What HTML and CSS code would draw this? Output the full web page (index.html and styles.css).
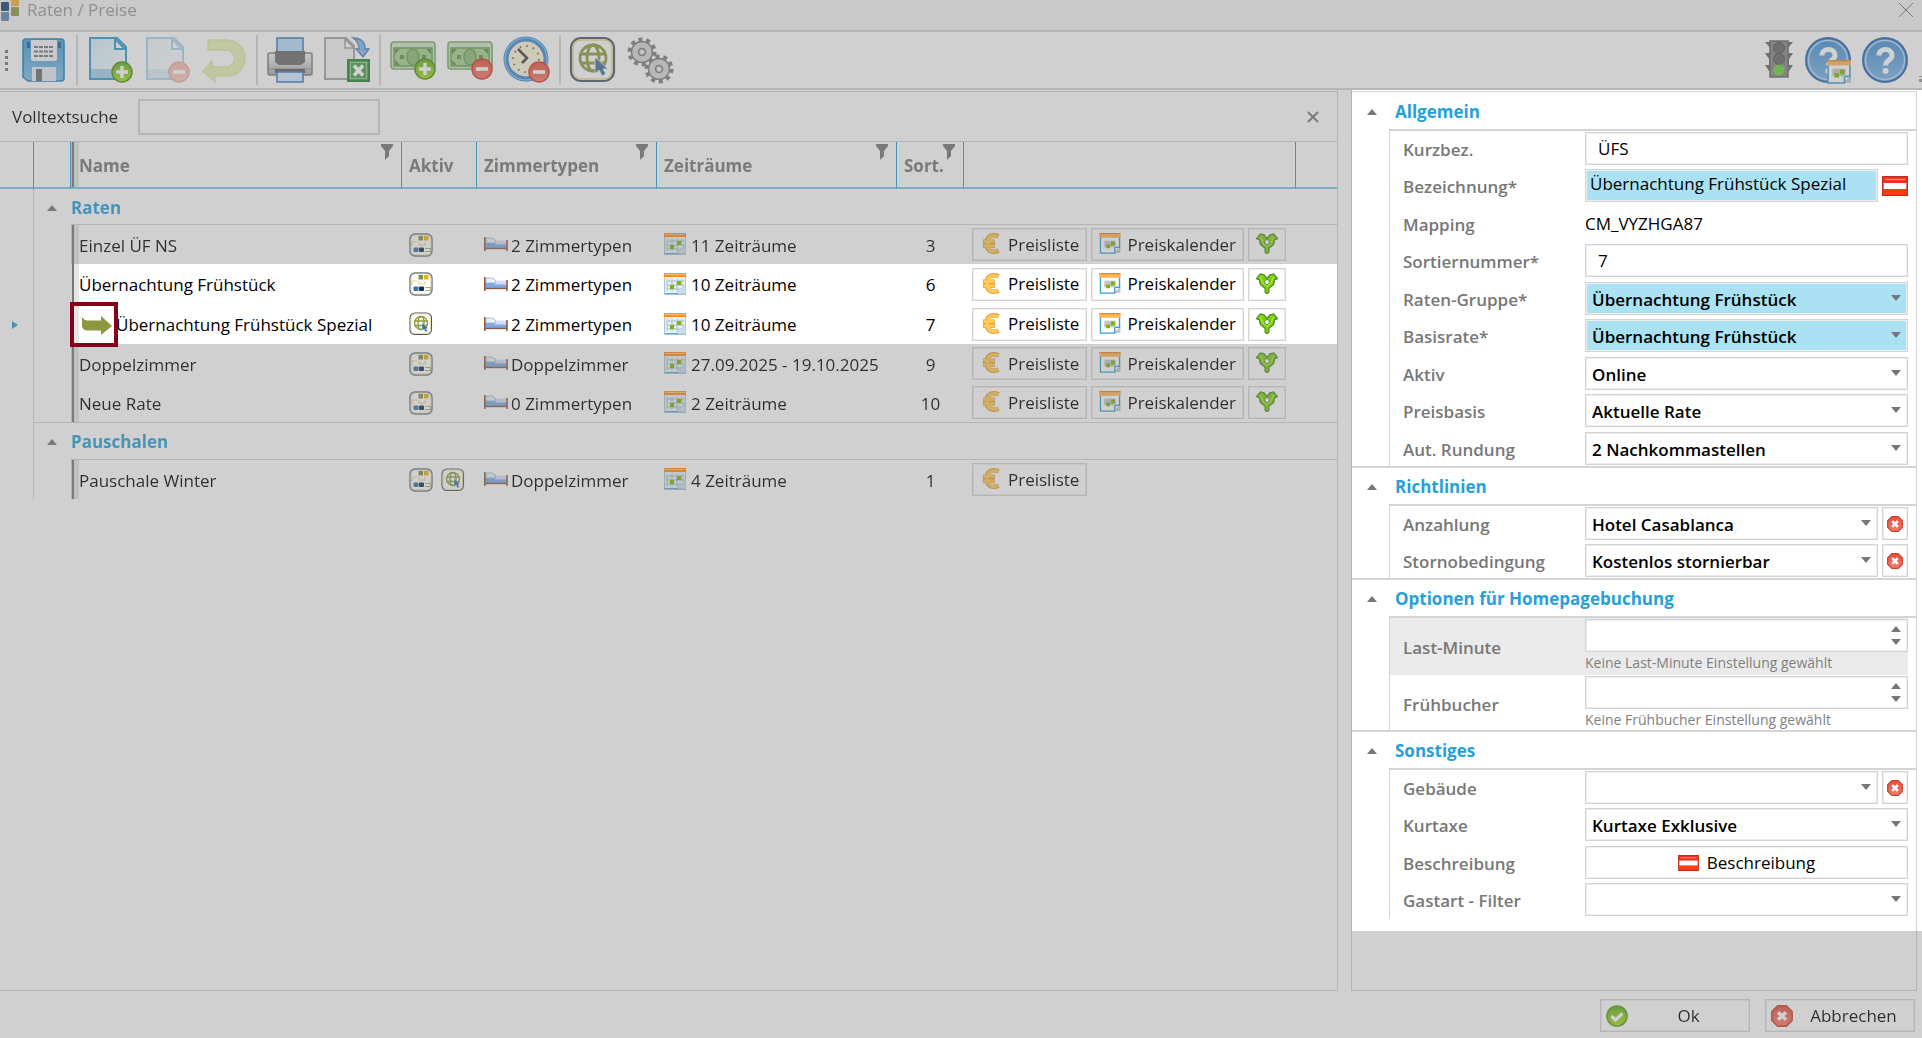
FILE: index.html
```html
<!DOCTYPE html>
<html lang="de">
<head>
  <meta charset="UTF-8">
  <meta name="viewport" content="width=device-width, initial-scale=1.0">
  <title>Raten / Preise</title>
  <link rel="stylesheet" href="styles.css">
</head>
<body>
  <!-- Icon sprite -->
  <svg class="sprite" aria-hidden="true">
    <defs>
      <linearGradient id="gBlue" x1="0" y1="0" x2="0" y2="1"><stop offset="0" stop-color="#3f9ed8"/><stop offset="1" stop-color="#7fbde6"/></linearGradient>
      <linearGradient id="gPage" x1="0" y1="0" x2="1" y2="1"><stop offset="0" stop-color="#d3edfa"/><stop offset="1" stop-color="#ffffff"/></linearGradient>
      <linearGradient id="gGrey" x1="0" y1="0" x2="0" y2="1"><stop offset="0" stop-color="#f4f4f4"/><stop offset="1" stop-color="#a9a9ad"/></linearGradient>
      <linearGradient id="gHelp" x1="0" y1="0" x2="0" y2="1"><stop offset="0" stop-color="#3f8fd6"/><stop offset="1" stop-color="#7db4e8"/></linearGradient>
      <linearGradient id="gGreen" x1="0" y1="0" x2="0" y2="1"><stop offset="0" stop-color="#5fae1c"/><stop offset="1" stop-color="#a8e01e"/></linearGradient>
      <linearGradient id="gRed" x1="0" y1="0" x2="0" y2="1"><stop offset="0" stop-color="#e2503f"/><stop offset="1" stop-color="#fb7a6a"/></linearGradient>
    </defs>
    <symbol id="plus" viewBox="0 0 22 22"><circle cx="11" cy="11" r="10" fill="url(#gGreen)" stroke="#4b8f14" stroke-width="1.5"/><path d="M11 5v12M5 11h12" stroke="#fff" stroke-width="3.4"/></symbol>
    <symbol id="minus" viewBox="0 0 22 22"><circle cx="11" cy="11" r="10" fill="url(#gRed)" stroke="#cf3b2c" stroke-width="1.5"/><path d="M5 11h12" stroke="#fff" stroke-width="3.6"/></symbol>
    <symbol id="save" viewBox="0 0 48 48">
      <path d="M6 3h35q3 0 3 3v36q0 3-3 3H8l-5-4V6q0-3 3-3z" fill="url(#gBlue)" stroke="#1f84c4" stroke-width="1.6"/>
      <path d="M7 6h3v6H7zM38 6h3v6h-3z" fill="#1c5f96"/>
      <path d="M11 4h26v19q0 2-2 2H13q-2 0-2-2z" fill="#f4f6fa"/>
      <path d="M14 11h20M14 15.500h20M14 20h20" stroke="#777" stroke-width="2" stroke-dasharray="4 1"/>
      <path d="M12 31h24v14H12z" fill="#e6eaf5"/><path d="M16 33h6v12h-6z" fill="#6e6e6e"/>
    </symbol>
    <symbol id="page" viewBox="0 0 48 48">
      <path d="M4 2h27l9 9v32H4z" fill="url(#gPage)" stroke="#2a9bd0" stroke-width="2"/>
      <path d="M5 33h34v9H5z" fill="#a5d3ec"/>
      <path d="M29 3v10h10z" fill="#fff" stroke="#2a9bd0" stroke-width="2"/>
    </symbol>
    <symbol id="page-add" viewBox="0 0 48 48"><use href="#page"/><use href="#plus" x="25" y="25" width="22" height="22"/></symbol>
    <symbol id="page-remove" viewBox="0 0 48 48"><use href="#page"/><use href="#minus" x="25" y="25" width="22" height="22"/></symbol>
    <symbol id="undo" viewBox="0 0 48 48"><path d="M8 4h18c26 0 24 37 1 36h-12v6L3 35l9-10v6h14c12 0 11-17 0-17H8z" fill="#c3e04a" stroke="#a6c931" stroke-width="1.500"/></symbol>
    <symbol id="printer" viewBox="0 0 48 48">
      <rect x="2" y="17" width="44" height="22" rx="2" fill="url(#gGrey)" stroke="#808080" stroke-width="1.6"/>
      <rect x="11" y="2" width="26" height="17" fill="#b9dafb" stroke="#3f7fc2" stroke-width="1.600"/>
      <path d="M9 15h30v11l-4 3H13l-4-3z" fill="#6a6a6a"/>
      <path d="M3 33h42" stroke="#8f8f8f"/>
      <rect x="9" y="33" width="30" height="4" fill="#5c5c5c"/>
      <rect x="11" y="36" width="26" height="10" fill="#d6eaff" stroke="#3f7fc2" stroke-width="1.600"/>
    </symbol>
    <symbol id="excel" viewBox="0 0 48 48">
      <path d="M2 2h21l8 8v33H2z" fill="#f4f4f4" stroke="#a5a5a5" stroke-width="2"/><path d="M22 3v9h9z" fill="#fff" stroke="#a5a5a5" stroke-width="1.600"/>
      <path d="M30 2c10 0 12 6 12 11h4l-6 8-7-8h3c0-4-1-8-6-11z" fill="#86bdec" stroke="#4484bb" stroke-width="1.300"/>
      <rect x="25" y="24" width="21" height="21" fill="#46a046" stroke="#2b8430" stroke-width="2"/><rect x="27.500" y="26.500" width="16" height="16" fill="none" stroke="#9bd09b"/><path d="M31 29.500l9 10M40 29.500l-9 10" stroke="#fff" stroke-width="3.600"/>
    </symbol>
    <symbol id="money" viewBox="0 0 48 48">
      <rect x="2" y="6" width="44" height="27" rx="3" fill="#cfe8bf" stroke="#79ac6a" stroke-width="1.600"/>
      <rect x="5" y="12" width="38" height="18" fill="#a8d18f" stroke="#69a35a" stroke-width="1.600"/>
      <ellipse cx="24" cy="21" rx="6" ry="8" fill="#8cba7b" stroke="#69a35a" stroke-width="1.600"/>
      <path d="M11 19h4v4h-4zM33 19h4v4h-4zM6 13h5l-5 5zM42 13h-5l5 5zM6 29h5l-5-5z" fill="#5c934f"/>
    </symbol>
    <symbol id="money-add" viewBox="0 0 48 48"><use href="#money"/><use href="#plus" x="25" y="22" width="22" height="22"/></symbol>
    <symbol id="money-remove" viewBox="0 0 48 48"><use href="#money"/><use href="#minus" x="25" y="22" width="22" height="22"/></symbol>
    <symbol id="clock" viewBox="0 0 48 48">
      <circle cx="23" cy="23" r="20" fill="#fcf5d8" stroke="#3b8bd2" stroke-width="5"/><circle cx="23" cy="23" r="21" fill="none" stroke="#8fc4f0" stroke-width="1.200"/>
      <path d="M15 13l9 9-5 5" fill="none" stroke="#444" stroke-width="2.600"/>
      <circle cx="23" cy="23" r="13" fill="none" stroke="#666" stroke-width="2" stroke-dasharray="1.500 5.300"/>
      <use href="#minus" x="25" y="25" width="22" height="22"/>
    </symbol>
    <symbol id="web" viewBox="0 0 48 48">
      <rect x="2" y="2" width="43" height="43" rx="10" fill="#fdfdfd" stroke="#4c5a66" stroke-width="2.200"/><rect x="4" y="4" width="39" height="39" rx="8" fill="none" stroke="#e8d690" stroke-width="1.500"/>
      <g fill="none" stroke="#8d9b3d" stroke-width="2.800"><circle cx="24" cy="22" r="13"/><ellipse cx="24" cy="22" rx="6" ry="13"/><path d="M11 18h26M12 27h24"/></g>
      <path d="M26 21v17l4-4 3 6 4-2-3-5h5z" fill="#3f719a" stroke="#fff" stroke-width=".8"/>
    </symbol>
    <symbol id="gears" viewBox="0 0 48 48">
      <g fill="none" stroke="#7d7d7d"><circle cx="16" cy="16" r="12.500" stroke-width="4" stroke-dasharray="4 3.850"/><circle cx="33" cy="33" r="12.500" stroke-width="4" stroke-dasharray="4 3.850"/></g>
      <g fill="#d5d7da" stroke="#7d7d7d" stroke-width="1.500"><circle cx="16" cy="16" r="10.500"/><circle cx="16" cy="16" r="3.500"/><circle cx="33" cy="33" r="10.500"/><circle cx="33" cy="33" r="3.500"/></g>
      <g fill="#fff"><circle cx="16" cy="16" r="1.500"/><circle cx="33" cy="33" r="1.500"/></g>
    </symbol>
    <symbol id="traffic" viewBox="0 0 32 48">
      <path d="M2 6h28l-5 6v5h5l-4 6v6h4l-4 6H6l-4-6h4v-6l-4-6h5v-5z" fill="#666"/>
      <rect x="7" y="5" width="18" height="36" fill="#868686" stroke="#666" stroke-width="1.500"/>
      <circle cx="16" cy="12" r="5.500" fill="#666" stroke="#505050"/><circle cx="16" cy="23" r="5.500" fill="#666" stroke="#505050"/><circle cx="16" cy="34" r="5.500" fill="#6cd03c"/>
    </symbol>
    <symbol id="help" viewBox="0 0 48 48">
      <circle cx="24" cy="24" r="22" fill="url(#gHelp)" stroke="#2a66b5" stroke-width="2"/><circle cx="24" cy="24" r="19.500" fill="none" stroke="#b8d8f6" stroke-width="1.500"/>
      <path d="M18 19.500c0-8 13-8 13 0 0 4.500-6.500 4.500-6.500 10" fill="none" stroke="#fff" stroke-width="5"/><circle cx="24.500" cy="35" r="3" fill="#fff"/>
    </symbol>
    <symbol id="calendar" viewBox="0 0 22 22">
      <rect x=".5" y=".5" width="21" height="21" fill="#e2f2fb" stroke="#a9c4d2"/><path d="M0 0h22v4H0z" fill="#ff8c1a"/><path d="M1 1.500h20" stroke="#ffc27a"/>
      <path d="M3 6v12M8 6v12M13 6v12M18 6v7M3 8h17M3 12h17M3 16h12" stroke="#b5bcc0" stroke-width="1"/>
      <path d="M6 12h4v4H6zM13 8h4v4h-4z" fill="#76b900"/><path d="M13 21c2-2 0-5 4-5 2-1 3-3 5-5v10z" fill="#c9dfee" stroke="#9db8ca" stroke-width=".7"/><path d="M1 20.500h13" stroke="#58aad8"/>
    </symbol>
    <symbol id="calendar2" viewBox="0 0 22 22">
      <path d="M15 21h7v-7z" fill="#c5c9cd"/>
      <path d="M1 1h20v14h-5v6H1z" fill="#fff" stroke="#3b9dd0" stroke-width="1.400"/><path d="M0 0h22v5H0z" fill="#ffb45c"/><path d="M0 .6h22" stroke="#e8831c" stroke-width="1.200"/>
      <rect x="5" y="8" width="12" height="7" fill="#c7c7c7"/><path d="M7 12h4v4H7zM12 9h4v4h-4z" fill="#76b900"/>
    </symbol>
    <symbol id="help-cal" viewBox="0 0 48 48"><use href="#help"/><use href="#calendar2" x="23" y="24" width="24" height="24"/></symbol>
    <symbol id="bed" viewBox="0 0 24 16"><path d="M1 7h22v5H1z" fill="#7ba9e6"/><path d="M11 4.500h12v4H11z" fill="#d6dcfb"/><path d="M2 2h6q4 1 4 5H2z" fill="#e8f4fb" stroke="#9bb8c8" stroke-width=".9"/><path d="M.8 1v14M23 4v11" stroke="#8f5a41" stroke-width="1.600"/><path d="M1 12.500h22" stroke="#8f5a41" stroke-width="1.400"/></symbol>
    <symbol id="channel" viewBox="0 0 24 24">
      <rect x="1" y="1" width="22" height="22" rx="5" fill="#fff" stroke="#6b7780" stroke-width="1.400"/><rect x="2.200" y="2.200" width="19.600" height="19.600" rx="4" fill="none" stroke="#eadfae" stroke-width=".8"/>
      <path d="M9.500 3h4.500v4.500H9.500z" fill="#7f8d4c"/><path d="M15 3h4.500v4.500H15z" fill="#e8b316"/>
      <path d="M3 13V9h5M10 9v3h6V9" fill="none" stroke="#efd08a" stroke-width="1.200"/>
      <rect x="4.500" y="14.500" width="5" height="4.500" rx="1" fill="#41719d"/><rect x="10" y="14.500" width="5" height="4.500" rx="1" fill="#0c3357"/>
      <path d="M16 15.500h5.500v3H16" fill="none" stroke="#a9b27a" stroke-width="1.100"/>
    </symbol>
    <symbol id="euro" viewBox="0 0 20 22"><path d="M18 3.500C9 0 5.500 5 5.500 11S9 22 18 18.500M1.500 9h12.500M1.500 13.500h12.500" fill="none" stroke="#dc9c3a" stroke-width="4.600"/><path d="M17.500 3.600C9.500.8 6 5 6 11s3.500 10.200 11.500 7.400M2 9h11.500M2 13.500h11.500" fill="none" stroke="#ffcb54" stroke-width="3.200"/></symbol>
    <symbol id="fork" viewBox="0 0 22 22"><path d="M0 6l4-5 4 1 3 4 3-4 4-1 4 5-3 1-1 5-5 4v4l-2 2-2-2v-4l-5-4-1-5z" fill="#7ed00c" stroke="#4c8b24" stroke-width="1.300"/><circle cx="11" cy="9.500" r="2.600" fill="#fff" stroke="#4c8b24"/><path d="M4 4l3 7 4 3 4-3 3-7" fill="none" stroke="#bdf04d"/></symbol>
    <symbol id="flag" viewBox="0 0 26 20"><rect x=".8" y=".8" width="24.400" height="18.400" fill="#fff" stroke="#c0281a" stroke-width="1.600"/><path d="M1 1h24v6H1z" fill="#f3301c"/><path d="M1 13h24v6H1z" fill="#fa3c14"/><path d="M3 3.500h20" stroke="#ff9286" stroke-width="1.200"/></symbol>
    <symbol id="cross" viewBox="0 0 20 20"><path d="M6 .8h8L19.200 6v8L14 19.200H6L.8 14V6z" fill="url(#gRed)" stroke="#d04232" stroke-width="1.500"/><path d="M6.500 6.500l7 7M13.500 6.500l-7 7" stroke="#fff" stroke-width="3.200"/></symbol>
    <symbol id="check" viewBox="0 0 22 22"><circle cx="11" cy="11" r="10" fill="url(#gGreen)" stroke="#5d9a1e" stroke-width="1.600"/><path d="M5.500 11l4 4 7-6.500" fill="none" stroke="#fff" stroke-width="3.200"/></symbol>
    <symbol id="funnel" viewBox="0 0 12 16"><path d="M0 0h12v2L8 7v5l-4 4V7L0 2z" fill="#777"/></symbol>
    <symbol id="derived" viewBox="0 0 30 20"><path d="M0 1c2 3 4 3.500 8 3.500h11V0l11 10-11 9v-4.500H6c-4 0-6-2-6-5z" fill="#8f9640"/></symbol>
    <symbol id="logo" viewBox="0 0 19 21"><rect x="1" y="2" width="8" height="9" rx="1" fill="#1b4668"/><rect x="11" y="-3" width="8" height="9" fill="#f0b429"/><rect x="11" y="7" width="8" height="9" rx="1" fill="#8b9a4b"/><rect x="1" y="12" width="8" height="9" rx="1" fill="#5e88ab"/></symbol>
  </svg>

  <header class="titlebar dim">
    <svg class="logo"><use href="#logo"/></svg>
    <h1>Raten / Preise</h1>
    <button class="close" aria-label="Schließen"><svg viewBox="0 0 16 16"><path d="M1 1l14 14M15 1L1 15"/></svg></button>
  </header>

  <nav class="toolbar dim">
    <span class="grip"></span>
    <button class="tool" title="Speichern"><svg><use href="#save"/></svg></button>
    <span class="sep"></span>
    <button class="tool" title="Neu"><svg><use href="#page-add"/></svg></button>
    <button class="tool" title="Löschen" disabled><svg><use href="#page-remove"/></svg></button>
    <button class="tool" title="Rückgängig" disabled><svg><use href="#undo"/></svg></button>
    <span class="sep"></span>
    <button class="tool" title="Drucken"><svg><use href="#printer"/></svg></button>
    <button class="tool" title="Export"><svg><use href="#excel"/></svg></button>
    <span class="sep"></span>
    <button class="tool" title="Preis hinzufügen"><svg><use href="#money-add"/></svg></button>
    <button class="tool" title="Preis entfernen"><svg><use href="#money-remove"/></svg></button>
    <button class="tool" title="Zeitraum entfernen"><svg><use href="#clock"/></svg></button>
    <span class="sep"></span>
    <button class="tool" title="Online"><svg><use href="#web"/></svg></button>
    <button class="tool" title="Einstellungen"><svg><use href="#gears"/></svg></button>
    <span class="spacer"></span>
    <button class="tool narrow" title="Status"><svg><use href="#traffic"/></svg></button>
    <button class="tool" title="Termin"><svg><use href="#help-cal"/></svg></button>
    <button class="tool" title="Hilfe"><svg><use href="#help"/></svg></button>
    <span class="overflow"></span>
  </nav>

  <main>
    <section class="list">
      <div class="search dim">
        <label for="search">Volltextsuche</label>
        <input type="text" id="search">
        <button class="close" aria-label="Suche schließen"><svg viewBox="0 0 16 16"><path d="M3 3l10 10M13 3L3 13"/></svg></button>
      </div>

      <table class="rates">
        <colgroup>
          <col class="c-mark"><col class="c-exp"><col class="c-name"><col class="c-aktiv"><col class="c-zimmer"><col class="c-zeit"><col class="c-sort"><col class="c-actions"><col>
        </colgroup>
        <thead>
          <tr>
            <th></th>
            <th></th>
            <th class="name">Name<svg class="funnel"><use href="#funnel"/></svg></th>
            <th>Aktiv</th>
            <th>Zimmertypen<svg class="funnel"><use href="#funnel"/></svg></th>
            <th>Zeiträume<svg class="funnel"><use href="#funnel"/></svg></th>
            <th>Sort.<svg class="funnel"><use href="#funnel"/></svg></th>
            <th></th>
            <th></th>
          </tr>
        </thead>
        <tbody>
          <tr class="group">
            <td></td>
            <td><span class="arrow up"></span></td>
            <td colspan="7">Raten</td>
          </tr>
          <tr>
            <td></td><td></td>
            <td class="name">Einzel ÜF NS</td>
            <td><svg class="state"><use href="#channel"/></svg></td>
            <td><svg class="bed"><use href="#bed"/></svg>2 Zimmertypen</td>
            <td><svg class="cal"><use href="#calendar"/></svg>11 Zeiträume</td>
            <td class="num">3</td>
            <td class="actions"><button><svg class="euro"><use href="#euro"/></svg>Preisliste</button><button><svg><use href="#calendar2"/></svg>Preiskalender</button><button aria-label="Verteilen"><svg><use href="#fork"/></svg></button></td>
            <td></td>
          </tr>
          <tr class="lit">
            <td></td><td></td>
            <td class="name">Übernachtung Frühstück</td>
            <td><svg class="state"><use href="#channel"/></svg></td>
            <td><svg class="bed"><use href="#bed"/></svg>2 Zimmertypen</td>
            <td><svg class="cal"><use href="#calendar"/></svg>10 Zeiträume</td>
            <td class="num">6</td>
            <td class="actions"><button><svg class="euro"><use href="#euro"/></svg>Preisliste</button><button><svg><use href="#calendar2"/></svg>Preiskalender</button><button aria-label="Verteilen"><svg><use href="#fork"/></svg></button></td>
            <td></td>
          </tr>
          <tr class="lit">
            <td><span class="current"></span></td><td></td>
            <td class="name derived"><span class="marker"></span><svg class="derived-icon"><use href="#derived"/></svg>Übernachtung Frühstück Spezial</td>
            <td><svg class="state"><use href="#web"/></svg></td>
            <td><svg class="bed"><use href="#bed"/></svg>2 Zimmertypen</td>
            <td><svg class="cal"><use href="#calendar"/></svg>10 Zeiträume</td>
            <td class="num">7</td>
            <td class="actions"><button><svg class="euro"><use href="#euro"/></svg>Preisliste</button><button><svg><use href="#calendar2"/></svg>Preiskalender</button><button aria-label="Verteilen"><svg><use href="#fork"/></svg></button></td>
            <td></td>
          </tr>
          <tr>
            <td></td><td></td>
            <td class="name">Doppelzimmer</td>
            <td><svg class="state"><use href="#channel"/></svg></td>
            <td><svg class="bed"><use href="#bed"/></svg>Doppelzimmer</td>
            <td><svg class="cal"><use href="#calendar"/></svg>27.09.2025 - 19.10.2025</td>
            <td class="num">9</td>
            <td class="actions"><button><svg class="euro"><use href="#euro"/></svg>Preisliste</button><button><svg><use href="#calendar2"/></svg>Preiskalender</button><button aria-label="Verteilen"><svg><use href="#fork"/></svg></button></td>
            <td></td>
          </tr>
          <tr>
            <td></td><td></td>
            <td class="name">Neue Rate</td>
            <td><svg class="state"><use href="#channel"/></svg></td>
            <td><svg class="bed"><use href="#bed"/></svg>0 Zimmertypen</td>
            <td><svg class="cal"><use href="#calendar"/></svg>2 Zeiträume</td>
            <td class="num">10</td>
            <td class="actions"><button><svg class="euro"><use href="#euro"/></svg>Preisliste</button><button><svg><use href="#calendar2"/></svg>Preiskalender</button><button aria-label="Verteilen"><svg><use href="#fork"/></svg></button></td>
            <td></td>
          </tr>
          <tr class="group next">
            <td></td>
            <td><span class="arrow up"></span></td>
            <td colspan="7">Pauschalen</td>
          </tr>
          <tr>
            <td></td><td></td>
            <td class="name">Pauschale Winter</td>
            <td><svg class="state"><use href="#channel"/></svg><svg class="state"><use href="#web"/></svg></td>
            <td><svg class="bed"><use href="#bed"/></svg>Doppelzimmer</td>
            <td><svg class="cal"><use href="#calendar"/></svg>4 Zeiträume</td>
            <td class="num">1</td>
            <td class="actions"><button><svg class="euro"><use href="#euro"/></svg>Preisliste</button></td>
            <td></td>
          </tr>
        </tbody>
      </table>
    </section>

    <aside class="details">
      <form class="form">
        <div class="form-inner">
          <h2><span class="arrow up"></span>Allgemein</h2>
          <div class="fields">
            <div class="row"><label for="kurz">Kurzbez.</label><div class="value"><input type="text" id="kurz" class="wide-pad" value="ÜFS"></div></div>
            <div class="row"><label for="bez">Bezeichnung*</label><div class="value"><input type="text" id="bez" class="required" value="Übernachtung Frühstück Spezial"><button type="button" class="flag-btn" aria-label="Sprache"><svg><use href="#flag"/></svg></button></div></div>
            <div class="row"><span class="label">Mapping</span><div class="value">CM_VYZHGA87</div></div>
            <div class="row"><label for="sort">Sortiernummer*</label><div class="value"><input type="text" id="sort" class="wide-pad" value="7"></div></div>
            <div class="row"><label for="gruppe">Raten-Gruppe*</label><div class="value"><div class="select required"><select id="gruppe"><option>Übernachtung Frühstück</option></select></div></div></div>
            <div class="row"><label for="basis">Basisrate*</label><div class="value"><div class="select required"><select id="basis"><option>Übernachtung Frühstück</option></select></div></div></div>
            <div class="row"><label for="aktiv">Aktiv</label><div class="value"><div class="select"><select id="aktiv"><option>Online</option></select></div></div></div>
            <div class="row"><label for="preisbasis">Preisbasis</label><div class="value"><div class="select"><select id="preisbasis"><option>Aktuelle Rate</option></select></div></div></div>
            <div class="row"><label for="rundung">Aut. Rundung</label><div class="value"><div class="select"><select id="rundung"><option>2 Nachkommastellen</option></select></div></div></div>
          </div>

          <h2><span class="arrow up"></span>Richtlinien</h2>
          <div class="fields">
            <div class="row"><label for="anzahlung">Anzahlung</label><div class="value"><div class="select"><select id="anzahlung"><option>Hotel Casablanca</option></select></div><button type="button" class="clear" aria-label="Leeren"><svg><use href="#cross"/></svg></button></div></div>
            <div class="row"><label for="storno">Stornobedingung</label><div class="value"><div class="select"><select id="storno"><option>Kostenlos stornierbar</option></select></div><button type="button" class="clear" aria-label="Leeren"><svg><use href="#cross"/></svg></button></div></div>
          </div>

          <h2><span class="arrow up"></span>Optionen für Homepagebuchung</h2>
          <div class="fields">
            <div class="row tall hover"><label for="lastminute">Last-Minute</label><div class="value"><div class="spinner"><input type="text" id="lastminute"><span class="arrow up"></span><span class="arrow down"></span></div><small>Keine Last-Minute Einstellung gewählt</small></div></div>
            <div class="row tall"><label for="fruehbucher">Frühbucher</label><div class="value"><div class="spinner"><input type="text" id="fruehbucher"><span class="arrow up"></span><span class="arrow down"></span></div><small>Keine Frühbucher Einstellung gewählt</small></div></div>
          </div>

          <h2><span class="arrow up"></span>Sonstiges</h2>
          <div class="fields">
            <div class="row"><label for="gebaeude">Gebäude</label><div class="value"><div class="select"><select id="gebaeude"><option></option></select></div><button type="button" class="clear" aria-label="Leeren"><svg><use href="#cross"/></svg></button></div></div>
            <div class="row"><label for="kurtaxe">Kurtaxe</label><div class="value"><div class="select"><select id="kurtaxe"><option>Kurtaxe Exklusive</option></select></div></div></div>
            <div class="row"><label for="beschreibung">Beschreibung</label><div class="value"><button type="button" id="beschreibung" class="text-btn"><svg><use href="#flag"/></svg>Beschreibung</button></div></div>
            <div class="row"><label for="gastart">Gastart - Filter</label><div class="value"><div class="select"><select id="gastart"><option></option></select></div></div></div>
          </div>
        </div>
      </form>
      <div class="rest"></div>
    </aside>
  </main>

  <footer class="dim">
    <button><svg><use href="#check"/></svg><span>Ok</span></button>
    <button><svg><use href="#cross"/></svg><span>Abbrechen</span></button>
  </footer>
</body>
</html>
```

FILE: styles.css
```css
* {
  box-sizing: border-box;
}
body {
  margin: 0;
  min-height: 100vh;
  display: flex;
  flex-direction: column;
  background-color: #d0d0d0;
  font-family: "Open Sans", "Noto Sans", sans-serif;
  font-size: 17px;
  line-height: 24px;
  color: #000;
}
button, input, select {
  font: inherit;
  color: inherit;
  margin: 0;
  padding: 0;
  border-radius: 0;
}
button {
  background: none;
  border: none;
}
svg {
  display: block;
  flex-shrink: 0;
}
.sprite {
  position: absolute;
  width: 0;
  height: 0;
}

/* greyed out parts of the window */
.dim, .rates th, .rates td {
  background-color: #fff;
  filter: contrast(0.63);
}

.arrow {
  display: inline-block;
  border: 5px solid transparent;
}
.arrow.up {
  border-top: none;
  border-bottom: 6px solid #777;
}
.arrow.down {
  border-bottom: none;
  border-top: 6px solid #777;
}

/* title bar */
.titlebar {
  display: flex;
  align-items: flex-start;
  height: 32px;
  background-color: #f4f4f4;
  border-bottom: 2px solid #d4d4d4;
}
.logo {
  width: 19px;
  height: 21px;
}
.titlebar h1 {
  margin: 0 auto 0 8px;
  font-size: 17px;
  line-height: 20px;
  font-weight: 400;
  color: #999;
}
.close svg {
  width: 16px;
  height: 16px;
  fill: none;
  stroke: #777;
}
.titlebar .close {
  padding: 2px 8px;
}

/* toolbar */
.toolbar {
  position: relative;
  display: flex;
  align-items: center;
  gap: 9px;
  height: 58px;
  padding: 0 13px 0 5px;
  border-bottom: 2px solid #d4d4d4;
}
.grip {
  width: 3px;
  height: 21px;
  margin-right: 3px;
  background: repeating-linear-gradient(#777 0 3px, transparent 3px 6px);
}
.tool svg {
  width: 48px;
  height: 48px;
}
.tool.narrow svg {
  width: 32px;
}
.tool:disabled svg {
  opacity: 0.4;
}
.sep {
  width: 2px;
  height: 50px;
  margin: 0 -1px;
  background-color: #d4d4d4;
}
.spacer {
  flex: 1;
}
.overflow {
  position: absolute;
  right: 0;
  bottom: 6px;
  width: 3px;
  height: 6px;
  border-top: 1px solid #999;
  border-bottom: 3px solid #999;
}

main {
  flex: 1;
  display: grid;
  grid-template-columns: minmax(0, 1fr) 571px;
  gap: 13px;
}

/* left side */
.list {
  margin-top: 1px;
  border: 1px solid #b4b4b4;
  border-left: none;
}
.search {
  display: flex;
  align-items: center;
  height: 50px;
  padding: 0 16px 0 12px;
  border-bottom: 1px solid #d4d4d4;
}
.search label {
  width: 126px;
  padding-top: 1px;
}
.search input {
  width: 242px;
  height: 36px;
  padding: 0 8px;
  border: 2px solid #d4d4d4;
}
.search .close {
  margin-left: auto;
}
.search .close svg {
  stroke-width: 2;
}

.rates {
  width: 100%;
  table-layout: fixed;
  border-spacing: 0;
}
.c-mark { width: 34px; }
.c-exp { width: 37px; }
.c-name { width: 331px; }
.c-aktiv { width: 75px; }
.c-zimmer { width: 180px; }
.c-zeit { width: 240px; }
.c-sort { width: 67px; }
.c-actions { width: 332px; }

.rates th {
  position: relative;
  height: 47px;
  padding: 2px 0 0 7px;
  text-align: left;
  font-weight: 700;
  color: #777;
  border-right: 1px solid #26a0da;
  border-bottom: 2px solid #7cc4e8;
}
.rates th:last-child {
  border-right: none;
}
.funnel {
  position: absolute;
  top: 2px;
  right: 8px;
  width: 12px;
  height: 16px;
}
.rates td {
  height: 39px;
  padding: 2px 0 0 7px;
  white-space: nowrap;
}
.rates .lit td {
  height: 40px;
}
.rates td:first-child {
  border-right: 1px solid #d4d4d4;
}
.rates .name {
  padding-left: 8px;
  background-image: linear-gradient(90deg, #d0d0d0 1px, #777 1px 3px, #e6e6e6 3px 8px, transparent 8px);
}
.rates .lit td:nth-child(n+3) {
  filter: none;
}
.rates svg {
  display: inline-block;
  vertical-align: middle;
}
.rates .state {
  width: 24px;
  height: 24px;
  margin: -4px 8px 0 0;
}
.rates .bed {
  width: 24px;
  height: 16px;
  margin: -5px 3px 0 0;
}
.rates .cal {
  width: 22px;
  height: 22px;
  margin: -5px 5px 0 0;
}
.rates .num {
  padding-left: 0;
  text-align: center;
}
.rates .actions {
  padding: 0 0 0 8px;
}
.rates .current {
  display: block;
  width: 0;
  margin-left: 5px;
  border: 4px solid transparent;
  border-left: 6px solid #26a0da;
  border-right: none;
}

.rates .group td {
  height: 36px;
  padding: 2px 0 0;
  font-weight: 700;
  color: #26a0da;
}
.rates .group td:nth-child(2) {
  padding: 0 2px 4px 0;
  line-height: 10px;
  text-align: center;
}
.rates .group td:last-child {
  border-bottom: 1px solid #d4d4d4;
}
.rates .next td {
  height: 38px;
}
.rates .next td + td {
  border-top: 1px solid #d4d4d4;
}

.rates .derived {
  position: relative;
  z-index: 1;
}
.derived-icon {
  width: 30px;
  height: 20px;
  margin: 0 4px 0 3px;
}
.marker {
  position: absolute;
  top: -2px;
  left: -1px;
  width: 48px;
  height: 45px;
  border: 4px solid #870018;
}

.actions button {
  height: 33px;
  margin-right: 4px;
  padding: 0 7px;
  border: 1px solid #d4d4d4;
  vertical-align: middle;
  box-shadow: inset 0 0 0 1px #eee;
}
.actions button svg {
  width: 22px;
  height: 21px;
  margin-top: -4px;
}
.actions button:nth-child(-n+2) svg {
  margin-right: 6px;
}

/* right side */
.details {
  display: flex;
  flex-direction: column;
  border-left: 1px solid #b4b4b4;
}
.form {
  padding-top: 1px;
  background-color: #fff;
}
.form-inner {
  margin-right: 5px;
  padding-bottom: 12px;
  border-top: 1px solid #d4d4d4;
  border-right: 1px solid #d4d4d4;
}
.rest {
  flex: 1;
  margin-right: 5px;
  border: solid #b4b4b4;
  border-width: 0 1px 1px 0;
}
.form h2 {
  display: flex;
  align-items: center;
  height: 38px;
  margin: 0;
  padding-top: 2px;
  font-size: 17px;
  font-weight: 700;
  color: #26a0da;
  border-top: 2px solid #d4d4d4;
}
.form h2:first-child {
  height: 37px;
  border-top: none;
}
.form h2 .arrow {
  margin: 0 18px 0 15px;
}
.fields {
  margin-left: 37px;
  border-top: 2px solid #d4d4d4;
  border-left: 1px solid #d4d4d4;
}
.row {
  display: flex;
  height: 37px;
  padding: 1px 8px 0 13px;
}
.row:nth-child(even) {
  height: 38px;
}
.row:last-child {
  height: 35px;
}
.fields:last-child .row:last-child {
  height: 37px;
}
.row label, .row .label {
  width: 182px;
  padding-top: 6px;
  font-weight: 600;
  color: #777;
}
.value {
  flex: 1;
  display: flex;
  gap: 4px;
  height: 33px;
  line-height: 33px;
}
.value input, .select, .clear, .text-btn {
  height: 33px;
  border: 1px solid #d4d4d4;
  box-shadow: inset 0 0 0 1px #eee;
}
.value input {
  flex: 1;
  width: 100%;
  min-width: 0;
  padding: 0 4px;
}
.value input.wide-pad {
  padding-left: 12px;
}
.value .required {
  background-color: #aae2f3;
}
input.required {
  padding-bottom: 4px;
}
.select {
  position: relative;
  flex: 1;
}
.select select {
  width: 100%;
  height: 31px;
  padding: 0 24px 0 6px;
  appearance: none;
  background: none;
  border: none;
  font-weight: 600;
}
.select::after {
  content: "";
  position: absolute;
  top: 12px;
  right: 6px;
  border: 5px solid transparent;
  border-top: 6px solid #777;
  border-bottom: none;
}
.clear {
  width: 26px;
  padding: 0 4px;
}
.clear svg {
  width: 16px;
  height: 16px;
}
.flag-btn svg {
  width: 26px;
  height: 20px;
}
.text-btn {
  flex: 1;
  display: flex;
  align-items: center;
  justify-content: center;
  gap: 8px;
}
.text-btn svg {
  width: 21px;
  height: 16px;
}
.row.tall {
  height: 57px;
}
.row.tall:last-child {
  height: 55px;
}
.row.tall label {
  padding-top: 17px;
}
.row.hover {
  background: linear-gradient(#eaeaea, #eaeaea) no-repeat 0 0 / calc(100% - 8px) 100%;
}
.tall .value {
  display: block;
}
.spinner {
  position: relative;
  height: 33px;
}
.spinner input {
  display: block;
}
.spinner .arrow {
  position: absolute;
  right: 7px;
  top: 7px;
}
.spinner .arrow.down {
  top: 20px;
}
.value small {
  display: block;
  font-size: 14px;
  line-height: 21px;
  color: #808080;
}

/* buttons at the bottom */
footer {
  display: flex;
  justify-content: flex-end;
  gap: 15px;
  height: 47px;
  padding: 8px 7px 0 0;
}
footer button {
  display: flex;
  align-items: center;
  width: 150px;
  height: 33px;
  padding-left: 5px;
  border: 1px solid #d4d4d4;
  box-shadow: inset 0 0 0 1px #eee;
}
footer button svg {
  width: 22px;
  height: 22px;
}
footer button span {
  flex: 1;
}
```
